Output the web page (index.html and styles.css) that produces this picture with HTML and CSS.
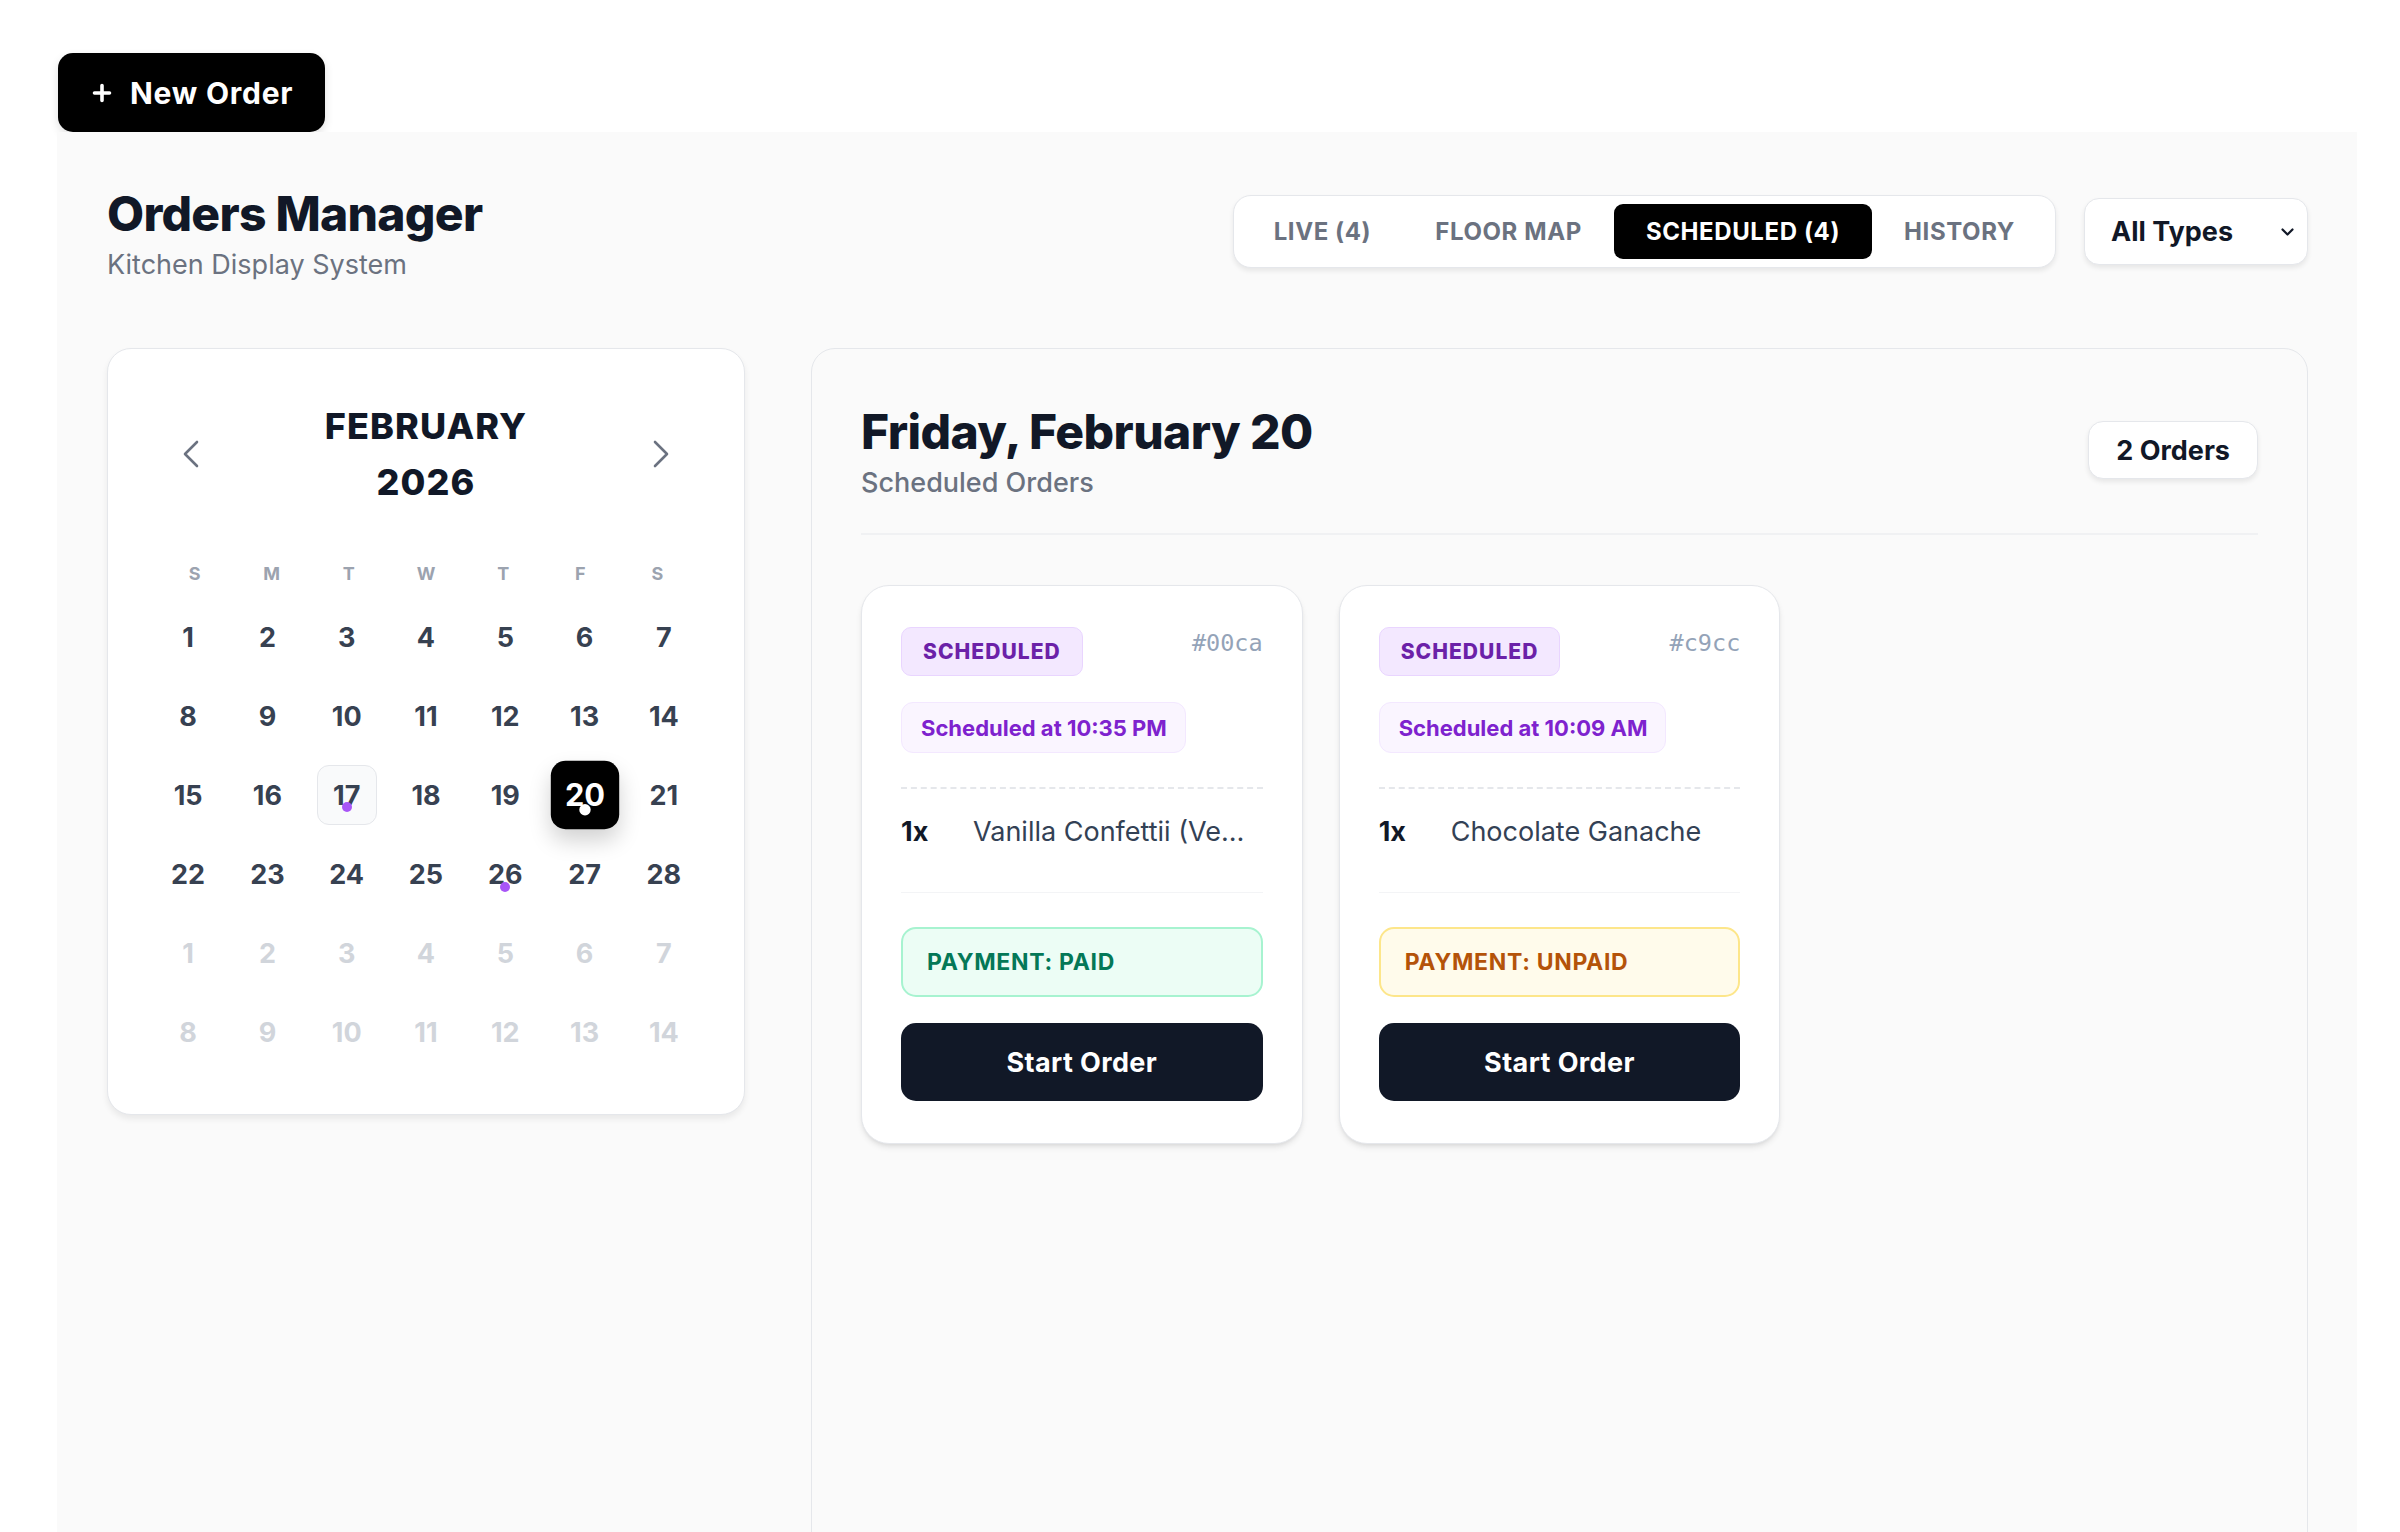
FILE: index.html
```html
<!DOCTYPE html>
<html lang="en">
<head>
<meta charset="utf-8">
<title>Orders Manager</title>
<link rel="stylesheet" href="styles.css">
</head>
<body>
<div class="page">
  <button class="new-order">
    <svg class="plus" width="20" height="20" viewBox="0 0 20 20"><path d="M10 2.5v15M2.5 10h15" stroke="#fff" stroke-width="3.6" stroke-linecap="round"/></svg>
    <span>New Order</span>
  </button>

  <main class="manager">
    <header class="top">
      <div class="brand">
        <h1>Orders Manager</h1>
        <p>Kitchen Display System</p>
      </div>
      <div class="controls">
        <nav class="tabs">
          <button class="tab">LIVE (4)</button>
          <button class="tab">FLOOR MAP</button>
          <button class="tab active">SCHEDULED (4)</button>
          <button class="tab">HISTORY</button>
        </nav>
        <div class="select">
          <span>All Types</span>
          <svg width="15" height="10" viewBox="0 0 15 10"><path d="M2.5 2.5 7.5 7.5 12.5 2.5" fill="none" stroke="#111827" stroke-width="2.2" stroke-linecap="round" stroke-linejoin="round"/></svg>
        </div>
      </div>
    </header>

    <div class="content">
      <section class="calendar">
        <div class="cal-head">
          <button class="nav"><svg width="18" height="28" viewBox="0 0 18 28"><path d="M15 2 3 14 15 26" fill="none" stroke="#6b7280" stroke-width="2.6" stroke-linecap="round" stroke-linejoin="round"/></svg></button>
          <div class="month"><span>FEBRUARY</span><span>2026</span></div>
          <button class="nav"><svg width="18" height="28" viewBox="0 0 18 28"><path d="M3 2 15 14 3 26" fill="none" stroke="#6b7280" stroke-width="2.6" stroke-linecap="round" stroke-linejoin="round"/></svg></button>
        </div>
        <div class="weekdays">
          <div class="dow">S</div><div class="dow">M</div><div class="dow">T</div><div class="dow">W</div><div class="dow">T</div><div class="dow">F</div><div class="dow">S</div>
        </div>
        <div class="days">
          <div class="day">1</div><div class="day">2</div><div class="day">3</div><div class="day">4</div><div class="day">5</div><div class="day">6</div><div class="day">7</div>
          <div class="day">8</div><div class="day">9</div><div class="day">10</div><div class="day">11</div><div class="day">12</div><div class="day">13</div><div class="day">14</div>
          <div class="day">15</div><div class="day">16</div><div class="day today">17<i class="dot"></i></div><div class="day">18</div><div class="day">19</div><div class="day selected">20<i class="dot"></i></div><div class="day">21</div>
          <div class="day">22</div><div class="day">23</div><div class="day">24</div><div class="day">25</div><div class="day">26<i class="dot"></i></div><div class="day">27</div><div class="day">28</div>
          <div class="day muted">1</div><div class="day muted">2</div><div class="day muted">3</div><div class="day muted">4</div><div class="day muted">5</div><div class="day muted">6</div><div class="day muted">7</div>
          <div class="day muted">8</div><div class="day muted">9</div><div class="day muted">10</div><div class="day muted">11</div><div class="day muted">12</div><div class="day muted">13</div><div class="day muted">14</div>
        </div>
      </section>

      <section class="panel">
        <div class="panel-head">
          <div>
            <h2>Friday, February 20</h2>
            <p>Scheduled Orders</p>
          </div>
          <div class="count">2 Orders</div>
        </div>

        <div class="orders">
          <article class="order">
            <div class="order-top">
              <span class="badge">SCHEDULED</span>
              <span class="oid">#00ca</span>
            </div>
            <span class="when">Scheduled at 10:35 PM</span>
            <div class="items">
              <div class="item"><span class="qty">1x</span><span class="name">Vanilla Confettii (Vegan)</span></div>
            </div>
            <div class="pay paid">PAYMENT: PAID</div>
            <button class="start">Start Order</button>
          </article>

          <article class="order">
            <div class="order-top">
              <span class="badge">SCHEDULED</span>
              <span class="oid">#c9cc</span>
            </div>
            <span class="when">Scheduled at 10:09 AM</span>
            <div class="items">
              <div class="item"><span class="qty">1x</span><span class="name">Chocolate Ganache</span></div>
            </div>
            <div class="pay unpaid">PAYMENT: UNPAID</div>
            <button class="start">Start Order</button>
          </article>
        </div>
      </section>
    </div>
  </main>
</div>
</body>
</html>
```

FILE: styles.css
```css
* {
  box-sizing: border-box;
  margin: 0;
  padding: 0;
}

html, body {
  overflow: hidden;
}

body {
  font-family: Inter, "Noto Sans", sans-serif;
  background: #ffffff;
  color: #111827;
}

button {
  font-family: inherit;
  cursor: pointer;
}

.page {
  display: flex;
  flex-direction: column;
  align-items: flex-start;
  padding: 53px 0 0 57px;
}

.new-order {
  margin-left: 1px;
  height: 79px;
  padding: 0 32px 0 34px;
  display: flex;
  align-items: center;
  gap: 18px;
  background: #000;
  color: #fff;
  border: none;
  border-radius: 15px;
  font-size: 30px;
  font-weight: 700;
  letter-spacing: 0.025em;
  box-shadow: 0 4px 10px rgba(0, 0, 0, 0.12);
}

.plus {
  display: block;
}

.manager {
  width: 2300px;
  min-height: 1420px;
  background: #fafafa;
  padding: 52px 49px 0 50px;
}

/* header */
.top {
  display: flex;
  justify-content: space-between;
  align-items: flex-start;
}

.brand h1 {
  font-size: 48px;
  font-weight: 800;
  letter-spacing: -0.015em;
  line-height: 60px;
  color: #111827;
}

.brand p {
  margin-top: 1px;
  font-size: 27px;
  line-height: 40px;
  color: #6b7280;
}

.controls {
  margin-top: 11px;
  display: flex;
  align-items: center;
  gap: 28px;
}

.tabs {
  display: flex;
  padding: 8px;
  background: #fff;
  border: 1px solid #e5e7eb;
  border-radius: 18px;
  box-shadow: 0 3px 5px rgba(0, 0, 0, 0.08);
}

.tab {
  height: 55px;
  padding: 0 32px;
  border: none;
  background: transparent;
  border-radius: 9px;
  font-size: 24px;
  font-weight: 700;
  letter-spacing: 0.025em;
  color: #6b7280;
}

.tab.active {
  background: #000;
  color: #fff;
}

.select {
  width: 224px;
  height: 67px;
  padding: 0 12px 0 26px;
  display: flex;
  align-items: center;
  justify-content: space-between;
  background: #fff;
  border: 1px solid #e5e7eb;
  border-radius: 15px;
  box-shadow: 0 3px 5px rgba(0, 0, 0, 0.08);
  font-size: 27px;
  font-weight: 700;
  color: #111827;
}

/* content */
.content {
  margin-top: 63px;
  display: flex;
  align-items: flex-start;
  gap: 66px;
}

.calendar {
  width: 638px;
  flex: none;
  background: #fff;
  border: 1px solid #e5e7eb;
  border-radius: 24px;
  padding: 49px 48px 52px;
  box-shadow: 0 4px 6px rgba(0, 0, 0, 0.07);
}

.cal-head {
  display: flex;
  align-items: center;
  justify-content: space-between;
  margin-bottom: 50px;
}

.nav {
  width: 70px;
  height: 70px;
  display: flex;
  align-items: center;
  justify-content: center;
  border: none;
  background: transparent;
}

.month {
  display: flex;
  flex-direction: column;
  align-items: center;
  font-size: 36px;
  font-weight: 800;
  letter-spacing: 0.03em;
  line-height: 56px;
  color: #111827;
}

.weekdays {
  display: grid;
  grid-template-columns: repeat(7, 1fr);
}

.dow {
  text-align: center;
  font-size: 18px;
  font-weight: 700;
  line-height: 27px;
  color: #9ca3af;
}

.days {
  margin-top: 20px;
  display: grid;
  grid-template-columns: repeat(7, 60px);
  column-gap: 19.3px;
  row-gap: 19px;
  justify-content: center;
}

.day {
  position: relative;
  width: 60px;
  height: 60px;
  display: flex;
  align-items: center;
  justify-content: center;
  border-radius: 12px;
  font-size: 27px;
  font-weight: 700;
  color: #374151;
}

.day.muted {
  color: #d1d5db;
}

.day.today {
  background: #f9fafb;
  border: 1.5px solid #e5e7eb;
}

.day.selected {
  background: #000;
  color: #fff;
  transform: scale(1.14);
  border-radius: 13px;
  box-shadow: 0 10px 20px rgba(0, 0, 0, 0.18);
}

.dot {
  position: absolute;
  left: 50%;
  bottom: 12px;
  width: 10px;
  height: 10px;
  margin-left: -5px;
  border-radius: 50%;
  background: #a855f7;
}

.day.selected .dot {
  background: #fff;
}

/* right panel */
.panel {
  flex: 1;
  min-width: 0;
  min-height: 1300px;
  background: #fafafa;
  border: 1px solid #e5e7eb;
  border-radius: 24px;
  padding: 49px;
}

.panel-head {
  display: flex;
  align-items: flex-start;
  justify-content: space-between;
  padding-top: 6px;
  padding-bottom: 30px;
  border-bottom: 2px solid #f0f1f3;
}

.panel-head h2 {
  font-size: 48px;
  font-weight: 800;
  letter-spacing: -0.012em;
  line-height: 56px;
  color: #111827;
}

.panel-head p {
  margin-top: 3px;
  font-size: 27px;
  font-weight: 500;
  line-height: 40px;
  color: #6b7280;
}

.count {
  margin-top: 17px;
  height: 58px;
  padding: 0 27px;
  display: flex;
  align-items: center;
  background: #fff;
  border: 1px solid #e5e7eb;
  border-radius: 15px;
  box-shadow: 0 3px 5px rgba(0, 0, 0, 0.08);
  font-size: 27px;
  font-weight: 700;
  color: #111827;
}

.orders {
  margin-top: 50px;
  display: grid;
  grid-template-columns: repeat(3, minmax(0, 1fr));
  gap: 36px;
  align-items: start;
}

.order {
  min-width: 0;
  display: flex;
  flex-direction: column;
  align-items: stretch;
  background: #fff;
  border: 1px solid #e5e7eb;
  border-radius: 28px;
  padding: 41px 39px 42px;
  box-shadow: 0 4px 6px -1px rgba(0, 0, 0, 0.1), 0 2px 4px -2px rgba(0, 0, 0, 0.08);
}

.order-top {
  display: flex;
  justify-content: space-between;
  align-items: flex-start;
}

.badge {
  height: 49px;
  padding: 0 21px;
  display: flex;
  align-items: center;
  background: #f3e8ff;
  border: 1.5px solid #e9d5ff;
  border-radius: 10px;
  font-size: 21px;
  font-weight: 800;
  letter-spacing: 0.05em;
  color: #6b21a8;
}

.oid {
  font-family: "DejaVu Sans Mono", "Liberation Mono", monospace;
  font-size: 23.5px;
  line-height: 33px;
  color: #94a3b8;
}

.when {
  align-self: flex-start;
  margin-top: 26px;
  height: 51px;
  padding: 0 18px 0 19px;
  display: flex;
  align-items: center;
  background: #faf5ff;
  border: 1.5px solid #f3e8ff;
  border-radius: 12px;
  font-size: 22px;
  font-weight: 700;
  color: #7e22ce;
}

.items {
  margin-top: 34px;
  padding: 23px 0 40px;
  border-top: 2px dashed #e5e7eb;
  border-bottom: 1.5px solid #f3f4f6;
}

.item {
  display: flex;
  font-size: 27px;
  line-height: 40px;
}

.qty {
  flex: none;
  width: 72px;
  font-weight: 700;
  color: #111827;
}

.name {
  flex: 1;
  min-width: 0;
  padding-right: 14px;
  overflow: hidden;
  white-space: nowrap;
  text-overflow: ellipsis;
  color: #334155;
}

.pay {
  margin-top: 34px;
  height: 70px;
  padding-left: 24px;
  display: flex;
  align-items: center;
  border: 2px solid;
  border-radius: 15px;
  font-size: 23px;
  font-weight: 700;
  letter-spacing: 0.03em;
}

.pay.paid {
  background: #ecfdf5;
  border-color: #a7f3d0;
  color: #047857;
}

.pay.unpaid {
  background: #fffbeb;
  border-color: #fde68a;
  color: #b45309;
}

.start {
  margin-top: 26px;
  height: 78px;
  border: none;
  border-radius: 15px;
  background: #111827;
  color: #fff;
  font-size: 27px;
  font-weight: 700;
  letter-spacing: 0.015em;
}
```
